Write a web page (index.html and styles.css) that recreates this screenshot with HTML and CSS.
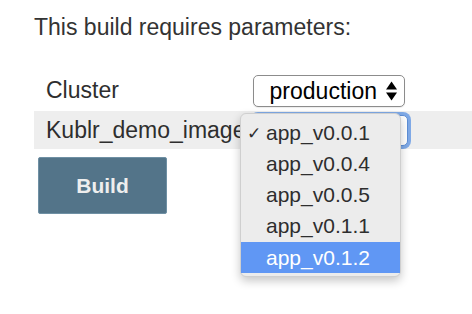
FILE: index.html
```html
<!DOCTYPE html>
<html>

<head>
    <link rel="stylesheet" href="styles.css">
</head>

<body>

    <div class="page">
        <h1 class="title">This build requires parameters:</h1>

        <div class="params">
            <div class="row">
                <div class="label">Cluster</div>
                <div class="select">
                    <span class="value">production</span>
                    <svg class="arrows" width="11" height="20" viewBox="0 0 11 20">
                        <path d="M5.5 0.5 L11 8.5 L0 8.5 Z" fill="#000"/>
                        <path d="M5.5 19.5 L11 11.5 L0 11.5 Z" fill="#000"/>
                    </svg>
                </div>
            </div>
            <div class="row alt">
                <div class="label">Kublr_demo_image</div>
                <!-- value is hidden behind the open menu -->
                <div class="select wide focus">
                    <svg class="arrows" width="11" height="20" viewBox="0 0 11 20">
                        <path d="M5.5 0.5 L11 8.5 L0 8.5 Z" fill="#000"/>
                        <path d="M5.5 19.5 L11 11.5 L0 11.5 Z" fill="#000"/>
                    </svg>
                </div>
            </div>
        </div>

        <button class="build">Build</button>
    </div>

    <!-- open dropdown -->
    <div class="menu">
        <div class="item"><span class="check">&#10003;</span>app_v0.0.1</div>
        <div class="item">app_v0.0.4</div>
        <div class="item">app_v0.0.5</div>
        <div class="item">app_v0.1.1</div>
        <div class="item active">app_v0.1.2</div>
    </div>

</body>

</html>
```

FILE: styles.css
```css
body {
    font-family: "Liberation Sans", Arial, Helvetica, sans-serif;
    margin: 0;
    background-color: #fff;
    color: #333;
    overflow: hidden;
}

.page {
    padding: 14px 0 0 34px;
}

.title {
    font-size: 23px;
    font-weight: normal;
    line-height: 26px;
    margin: 0 0 31px 0;
}

.params {
    display: flex;
    flex-direction: column;
    gap: 2px;
}

.row {
    display: flex;
    align-items: center;
    height: 38px;
    padding-left: 12px;
}

.row.alt {
    background-color: #eee;
}

.label {
    width: 207px;
    font-size: 23px;
    line-height: 26px;
    white-space: nowrap;
    color: #2e2e2e;
}

.select {
    box-sizing: border-box;
    width: 152px;
    height: 32px;
    display: flex;
    align-items: center;
    justify-content: flex-end;
    gap: 9px;
    padding-right: 7px;
    border: 1px solid #8c8c8c;
    border-radius: 5px;
    background-color: #fff;
    box-shadow: 0 1px 1px rgba(0, 0, 0, 0.08);
    color: #000;
    font-size: 23px;
    margin-top: 2px;
}

.select.wide {
    width: 155px;
    height: 31px;
    margin-top: 0;
}

.select.focus {
    box-shadow: 0 0 0 3px #7fa9e6;
    border-color: #5e8fd6;
}

.arrows {
    flex: none;
}

.build {
    display: block;
    box-sizing: border-box;
    width: 129px;
    height: 57px;
    margin: 8px 0 0 4px;
    background-color: #537489;
    border: 1px solid #6f90a4;
    border-radius: 2px;
    color: #eee;
    font-family: "Liberation Sans", Arial, Helvetica, sans-serif;
    font-size: 21px;
    font-weight: bold;
}

.menu {
    position: absolute;
    left: 240px;
    top: 113px;
    box-sizing: border-box;
    width: 161px;
    height: 164px;
    padding: 3px 0 0 0;
    background-color: #ececec;
    border: 1px solid #cfcfcf;
    border-radius: 6px;
    box-shadow: 0 4px 10px rgba(0, 0, 0, 0.22);
}

.item {
    position: relative;
    height: 31px;
    line-height: 31px;
    padding-left: 25px;
    font-size: 21px;
    color: #2e2e2e;
}

.item.active {
    margin-top: 1px;
    background-color: #6097f4;
    color: #fff;
}

.check {
    position: absolute;
    left: 6px;
    top: 1px;
    font-size: 17px;
    font-family: "DejaVu Sans", sans-serif;
}
```
